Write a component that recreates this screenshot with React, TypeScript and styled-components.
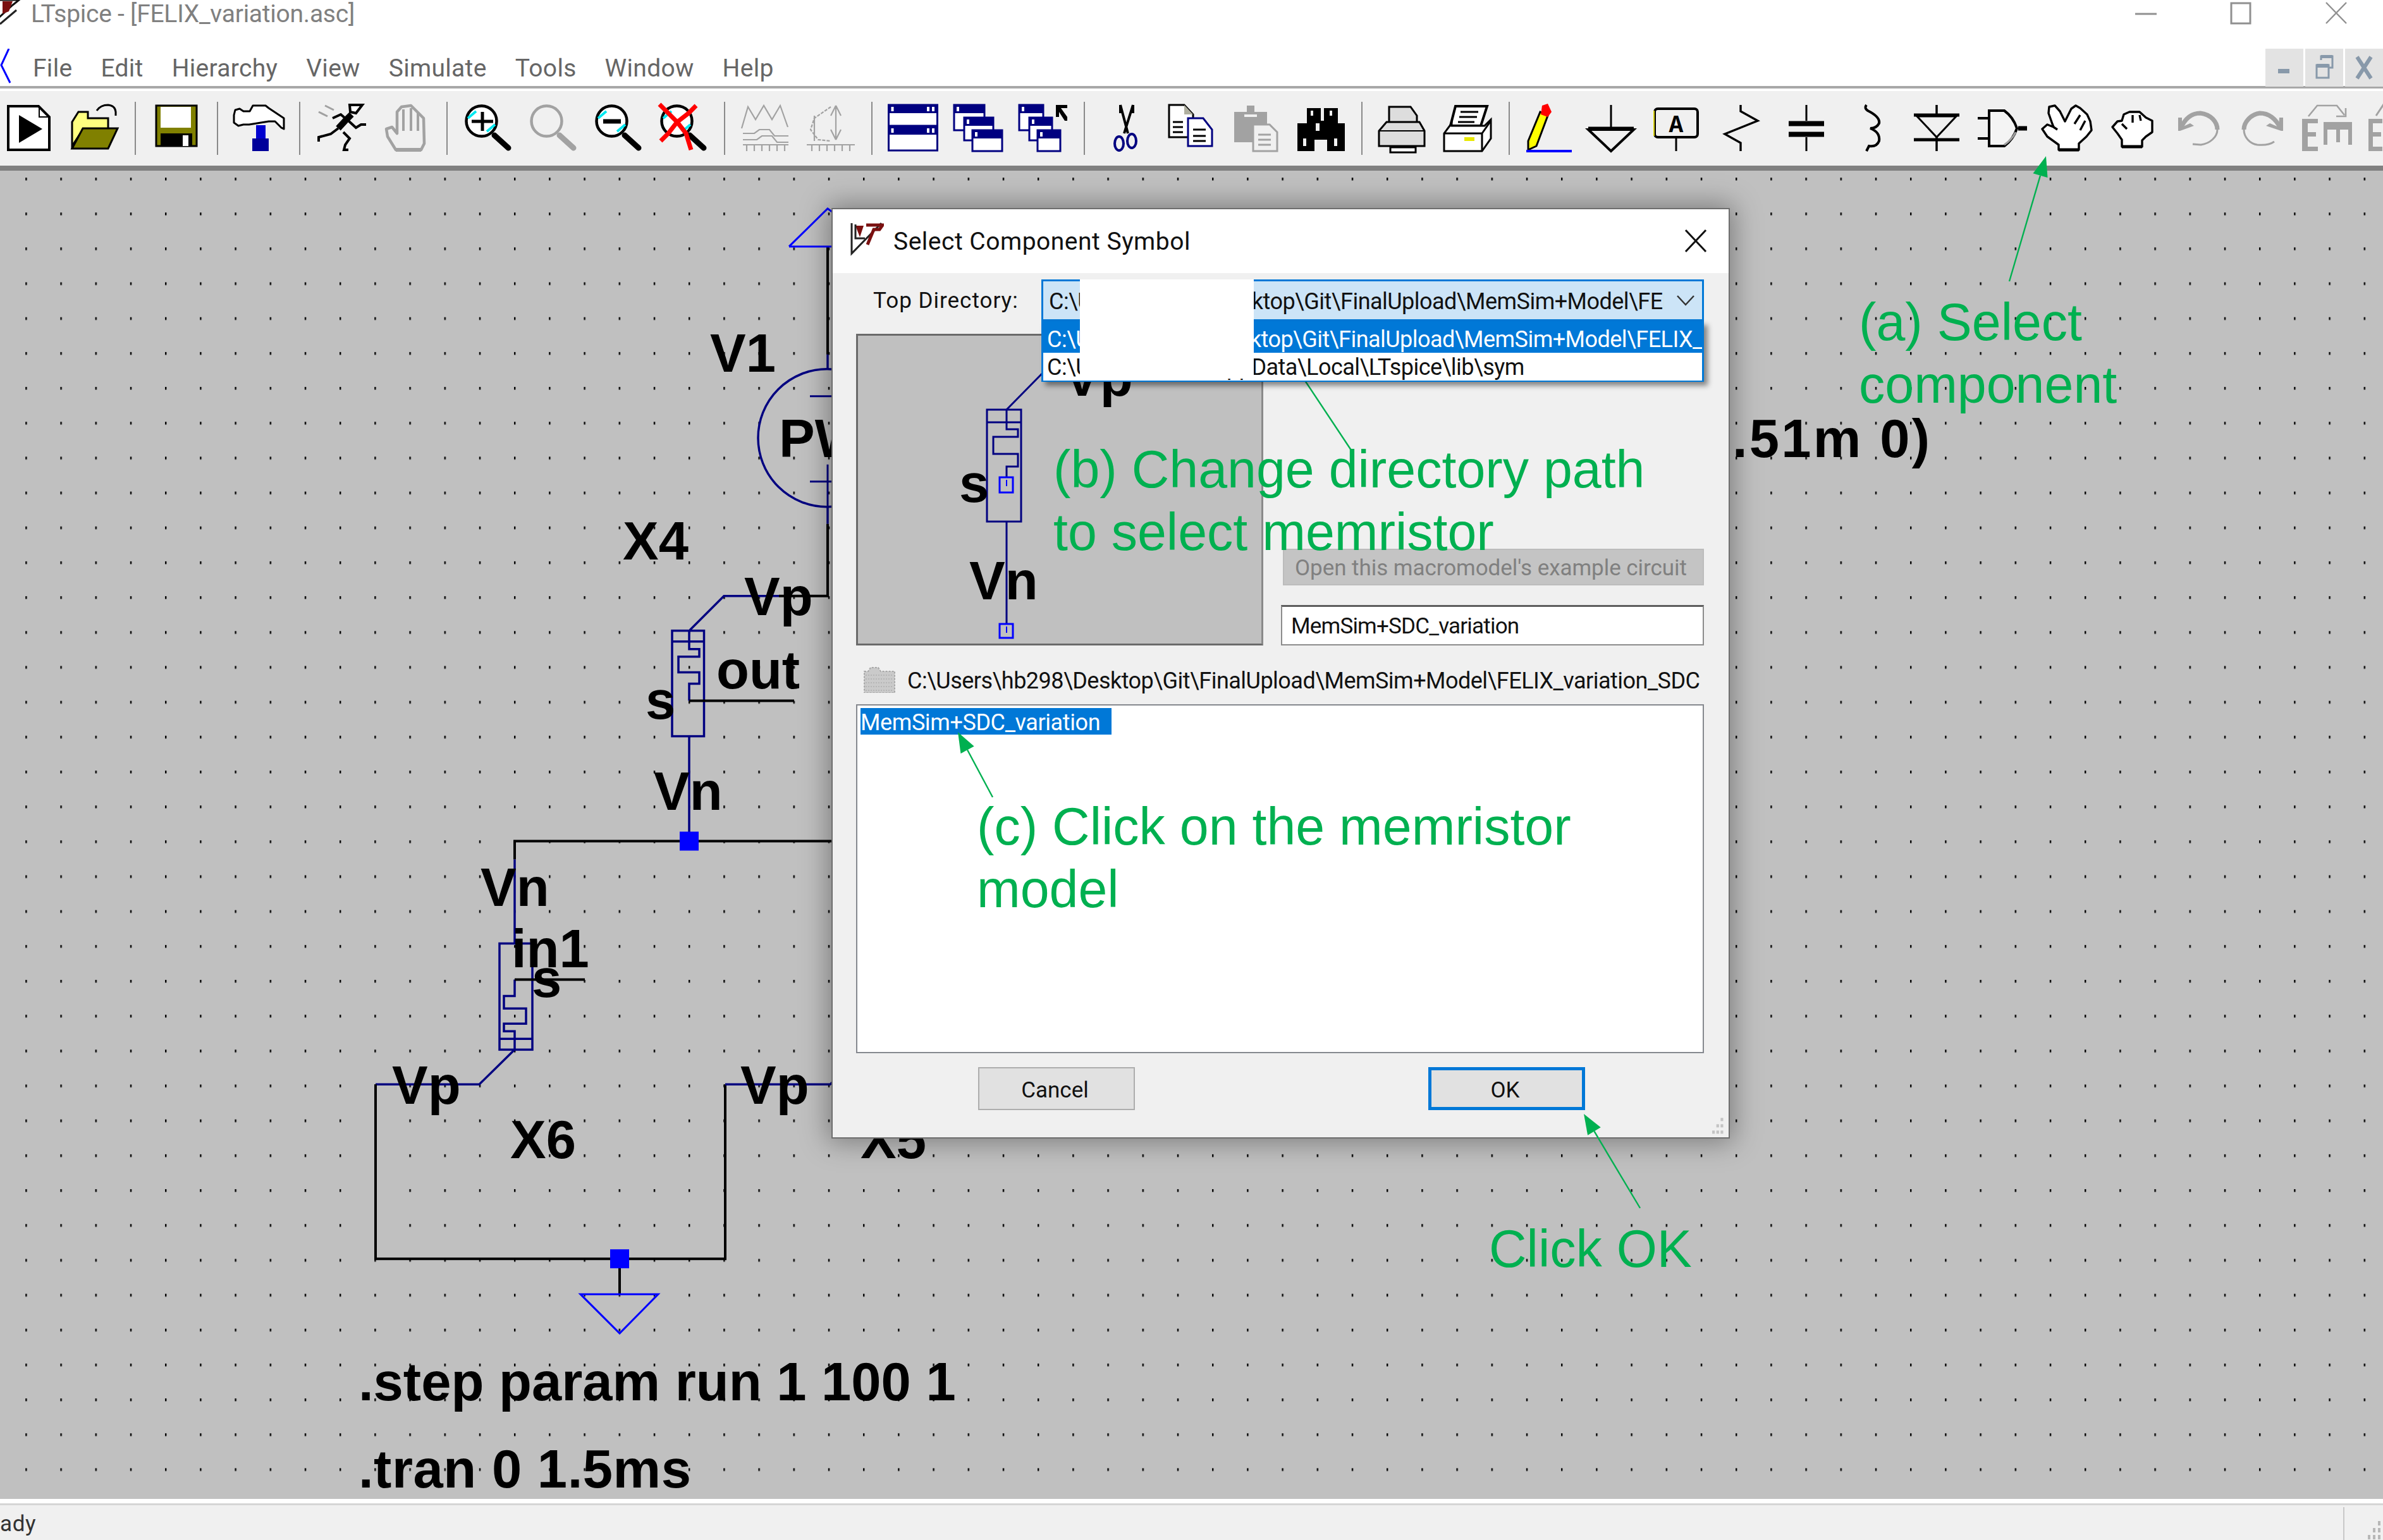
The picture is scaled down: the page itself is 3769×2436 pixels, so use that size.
import React from "react";
import styled, { createGlobalStyle } from "styled-components";

const Global = createGlobalStyle`
  html, body { margin: 0; padding: 0; background: #fff; }
  #root { width: 3769px; height: 2436px; }
`;

const Page = styled.div`
  position: relative;
  width: 3769px;
  height: 2436px;
  overflow: hidden;
  display: flex;
  flex-direction: column;
  font-family: Roboto, "Liberation Sans", sans-serif;
  background: #fff;
`;

const TitleBar = styled.div`
  height: 71px;
  display: flex;
  align-items: flex-start;
  background: #fff;
  flex: none;
`;
const AppIcon = styled.svg`
  width: 36px;
  height: 40px;
  flex: none;
  margin-left: 0;
`;
const AppTitle = styled.div`
  font-size: 39px;
  line-height: 44px;
  color: #808080;
  margin-left: 13px;
  flex: 1;
  letter-spacing: -0.25px;
`;
const WindowButtons = styled.div`
  display: flex;
  align-items: flex-start;
  margin-right: 56px;
  gap: 115px;
`;
const WindowGlyph = styled.svg`
  width: 36px;
  height: 40px;
  display: block;
`;

const MenuBar = styled.div`
  height: 69px;
  display: flex;
  align-items: flex-start;
  background: #fff;
  flex: none;
  border-bottom: 4px solid #a8a8a8;
  box-sizing: border-box;
`;
const BlueMark = styled.svg`
  width: 20px;
  height: 60px;
  flex: none;
  margin-top: 6px;
`;
const MenuList = styled.nav`
  display: flex;
  gap: 45px;
  margin-left: 32px;
  flex: 1;
  padding-top: 12px;
`;
const MenuItem = styled.span`
  font-size: 39px;
  line-height: 50px;
  color: #666;
  letter-spacing: 0.3px;
`;
const MdiButtons = styled.div`
  display: flex;
  gap: 3px;
  margin-top: 6px;
`;
const MdiButton = styled.div`
  width: 60px;
  height: 60px;
  background: #e3e3e3;
  display: flex;
  align-items: center;
  justify-content: center;
`;

const Toolbar = styled.div`
  flex: none;
  height: 130px;
  border-top: 4px solid #fff;
  border-bottom: 8px solid #808080;
  box-sizing: border-box;
  background: #f0f0f0;
  display: flex;
  align-items: center;
  margin-left: -6px;
  width: 3900px;
`;
const ToolSlot = styled.div<{ $w?: number }>`
  width: ${(p) => p.$w ?? 103}px;
  height: 80px;
  flex: none;
  display: flex;
  justify-content: center;
  align-items: center;
`;
const ToolIcon = styled.svg`
  width: 80px;
  height: 80px;
  display: block;
  overflow: visible;
  flex: none;
`;
const ToolSep = styled.div`
  width: 27px;
  flex: none;
  height: 84px;
  display: flex;
  justify-content: center;
  &::before {
    content: "";
    width: 2px;
    background: #8a8a8a;
  }
`;

const Canvas = styled.div`
  flex: 1;
  position: relative;
  background: #c0c0c0;
  min-height: 0;
`;
const SchematicSvg = styled.svg`
  width: 100%;
  height: 100%;
  display: block;
`;

const StatusBar = styled.div`
  flex: none;
  height: 65px;
  box-sizing: border-box;
  border-top: 3px solid #fff;
  display: flex;
  background: #f0f0f0;
  box-shadow: inset 0 4px 0 #fff, inset 0 7px 0 #d6d6d6;
  font-size: 35px;
  color: #333;
  align-items: flex-end;
`;
const StatusText = styled.div`
  flex: 1;
  line-height: 50px;
  letter-spacing: 0.6px;
`;
const StatusGrip = styled.div`
  width: 61px;
  height: 52px;
  border-left: 2px solid #c8c8c8;
  display: flex;
  justify-content: flex-end;
  align-items: flex-end;
`;

const Dialog = styled.div`
  position: absolute;
  left: 1317px;
  top: 331px;
  width: 1417px;
  height: 1468px;
  background: #f0f0f0;
  box-shadow: 0 0 0 2px #6e6e6e, 0 0 40px 8px rgba(0, 0, 0, 0.35);
  display: flex;
  flex-direction: column;
`;
const DialogTitle = styled.div`
  height: 101px;
  background: #fff;
  display: flex;
  align-items: center;
  flex: none;
  font-size: 39px;
  color: #111;
`;
const DialogLogo = styled.svg`
  width: 54px;
  height: 54px;
  margin-left: 27px;
  margin-top: -8px;
  flex: none;
`;
const DialogCaption = styled.div`
  margin-left: 15px;
  flex: 1;
  margin-top: 1px;
  letter-spacing: 0.5px;
`;
const DialogClose = styled.svg`
  width: 36px;
  height: 36px;
  margin-right: 34px;
  margin-top: -2px;
`;
const DialogBody = styled.div`
  flex: 1;
  padding: 10px 39px 0 37px;
  display: flex;
  flex-direction: column;
  font-size: 36px;
  color: #111;
  position: relative;
`;
const TopRow = styled.div`
  display: flex;
  height: 66px;
  align-items: center;
  flex: none;
  position: relative;
  z-index: 3;
`;
const TopLabel = styled.div`
  width: 266px;
  margin-left: 27px;
  margin-top: 0;
  flex: none;
  font-size: 35px;
  letter-spacing: 1px;
`;
const Combo = styled.div`
  position: relative;
  width: 1048px;
  height: 66px;
  box-sizing: border-box;
  background: #cce4f7;
  border: 3px solid #0078d7;
  display: flex;
  align-items: center;
  padding-left: 9px;
`;
const ComboText = styled.div`
  width: 973px;
  overflow: hidden;
  white-space: nowrap;
  flex: none;
  letter-spacing: -0.53px;
  padding-top: 4px;
`;
const ComboArrow = styled.svg`
  width: 30px;
  height: 20px;
  margin-left: 19px;
  flex: none;
`;
const DropList = styled.div`
  position: absolute;
  left: -3px;
  right: -3px;
  top: 63px;
  height: 96px;
  box-sizing: border-box;
  background: #fff;
  border: 3px solid #0078d7;
  box-shadow: 6px 6px 8px rgba(0, 0, 0, 0.45);
`;
const DropItem = styled.div<{ $active?: boolean }>`
  height: ${(p) => (p.$active ? 47 : 44)}px;
  line-height: ${(p) => (p.$active ? 53 : 46)}px;
  padding-left: 6px;
  white-space: nowrap;
  overflow: hidden;
  letter-spacing: -0.53px;
  background: ${(p) => (p.$active ? "#0078d7" : "#fff")};
  color: ${(p) => (p.$active ? "#fff" : "#111")};
`;
const RedactPatch = styled.div`
  position: absolute;
  left: 58px;
  top: -3px;
  width: 275px;
  height: 157px;
  background: #fff;
`;
const MainRow = styled.div`
  display: flex;
  justify-content: space-between;
  margin-top: 20px;
  height: 493px;
  flex: none;
`;
const Preview = styled.div`
  width: 644px;
  height: 493px;
  box-sizing: border-box;
  background: #c0c0c0;
  border: 3px solid #6a6a6a;
  border-right-color: #8a8a8a;
  flex: none;
`;
const PreviewSvg = styled.svg`
  display: block;
  width: 100%;
  height: 100%;
`;
const SideColumn = styled.div`
  width: 669px;
  display: flex;
  flex-direction: column;
  justify-content: flex-end;
  align-items: flex-end;
  gap: 31px;
`;
const ExampleButton = styled.div`
  width: 666px;
  height: 58px;
  box-sizing: border-box;
  background: #c4c4c4;
  border: 2px solid #bcbcbc;
  color: #808080;
  display: flex;
  align-items: center;
  padding: 2px 0 0 17px;
  font-size: 35px;
  letter-spacing: -0.05px;
`;
const NameField = styled.div`
  width: 669px;
  height: 64px;
  box-sizing: border-box;
  background: #fff;
  border: 2px solid #8c8c8c;
  border-top: 3px solid #5c5c5c;
  padding: 2px 0 0 14px;
  display: flex;
  align-items: center;
  font-size: 35px;
  letter-spacing: -0.8px;
`;
const PathRow = styled.div`
  display: flex;
  align-items: center;
  margin-top: 33px;
  height: 42px;
  flex: none;
`;
const FolderGlyph = styled.svg`
  width: 52px;
  height: 42px;
  margin-left: 11px;
  flex: none;
`;
const PathText = styled.div`
  margin-left: 18px;
  padding-top: 4px;
  white-space: nowrap;
  letter-spacing: -0.52px;
`;
const ListBox = styled.div`
  margin-top: 18px;
  height: 552px;
  flex: none;
  box-sizing: border-box;
  background: #fff;
  border: 2px solid #85888e;
  padding: 4px 5px;
`;
const ListSelected = styled.div`
  width: 397px;
  height: 42px;
  line-height: 47px;
  background: #0078d7;
  color: #fff;
  white-space: nowrap;
  letter-spacing: -0.4px;
`;
const ButtonRow = styled.div`
  display: flex;
  margin-top: 22px;
  flex: none;
`;
const DialogButton = styled.div<{ $primary?: boolean }>`
  width: 248px;
  height: 68px;
  box-sizing: border-box;
  background: #e1e1e1;
  border: ${(p) => (p.$primary ? "5px solid #0078d7" : "2px solid #adadad")};
  margin-left: ${(p) => (p.$primary ? 464 : 193)}px;
  display: flex;
  align-items: center;
  justify-content: center;
  padding: 4px 5px 0 0;
  font-size: 35px;
`;
const DialogGrip = styled.svg`
  position: absolute;
  right: 6px;
  bottom: 4px;
  width: 30px;
  height: 30px;
`;

const AnnotationLayer = styled.svg`
  position: absolute;
  left: 0;
  top: 0;
  width: 3769px;
  height: 2436px;
  pointer-events: none;
`;
const Annotation = styled.div<{ $x: number; $y: number }>`
  position: absolute;
  left: ${(p) => p.$x}px;
  top: ${(p) => p.$y}px;
  font-family: "Liberation Sans", Arial, sans-serif;
  font-size: 82.5px;
  line-height: 99px;
  color: #00b050;
  white-space: pre;
`;

const NAVY = "#000080";
const BLUE = "#0000ff";

const Arrow = ({ x1, y1, x2, y2 }: { x1: number; y1: number; x2: number; y2: number }) => {
  const dx = x2 - x1;
  const dy = y2 - y1;
  const l = Math.hypot(dx, dy);
  const ux = dx / l;
  const uy = dy / l;
  const bx = x2 - ux * 32;
  const by = y2 - uy * 32;
  const hw = 12;
  return (
    <g>
      <line x1={x1} y1={y1} x2={bx} y2={by} stroke="#00b050" strokeWidth={2.4} />
      <polygon
        points={`${x2},${y2} ${bx - uy * hw},${by + ux * hw} ${bx + uy * hw},${by - ux * hw}`}
        fill="#00b050"
      />
    </g>
  );
};

const T = ({ x, y, len, children }: { x: number; y: number; len?: number; children: React.ReactNode }) => (
  <text
    x={x}
    y={y}
    textLength={len}
    fontFamily="'Liberation Sans', Arial, sans-serif"
    fontWeight={700}
    fontSize={85}
    fill="#000"
  >
    {children}
  </text>
);
const W = ({ d, c = "#000", w = 4 }: { d: string; c?: string; w?: number }) => (
  <path d={d} fill="none" stroke={c} strokeWidth={w} />
);

const Junction = ({ x, y }: { x: number; y: number }) => <rect x={x - 15} y={y - 15} width={30} height={30} fill={BLUE} />;

const Schematic = () => (
  <SchematicSvg viewBox="0 270 3769 2102" preserveAspectRatio="none">
    <defs>
      <pattern id="grid" x="41.2" y="283" width="55.2" height="55.2" patternUnits="userSpaceOnUse">
        <rect x="-1" y="-2" width="2.4" height="4.4" fill="#000" />
        <rect x="54.2" y="-2" width="2.4" height="4.4" fill="#000" />
        <rect x="-1" y="53.2" width="2.4" height="4.4" fill="#000" />
        <rect x="54.2" y="53.2" width="2.4" height="4.4" fill="#000" />
      </pattern>
    </defs>
    <rect x="0" y="270" width="3769" height="2102" fill="url(#grid)" />

    <W d="M1309 390V561" />
    <W d="M1248 390L1309 330L1330 345M1248 390H1340" c={BLUE} w={3} />
    <W d="M1309 561V585M1309 802V829" c={NAVY} w={3.5} />
    <circle cx="1308" cy="693" r="109" fill="none" stroke={NAVY} strokeWidth={3.5} />
    <W d="M1281 627H1330M1281 762H1330M1309 735V802" c={NAVY} w={3} />
    <W d="M1309 829V943H1232" />
    <W d="M1232 943H1145L1091 997" c={NAVY} w={3.5} />
    <rect x="1063" y="998" width="50.5" height="167" fill="none" stroke={NAVY} strokeWidth={3.5} />
    <W d="M1063 1015H1113M1090 998V1027H1106V1039H1073V1064H1106V1082H1090V1109" c={NAVY} w={3.5} />
    <W d="M1090 1109H1256" />
    <W d="M1090 1165V1331" c={NAVY} w={3.5} />
    <W d="M814 1360V1331H1340" />
    <W d="M814 1360V1493" c={NAVY} w={3.5} />
    <rect x="790" y="1493" width="52" height="168" fill="none" stroke={NAVY} strokeWidth={3.5} />
    <W d="M790 1644H842M814 1550V1576H797V1596H832V1620H797V1632H814V1661L758 1716H594" c={NAVY} w={3.5} />
    <W d="M814 1550H925" />
    <W d="M594 1716V1992H1147V1716" />
    <W d="M1147 1716H1313L1330 1700" c={NAVY} w={3.5} />
    <W d="M980 1992V2048" />
    <polygon points="918,2048 1041,2048 980,2110" fill="none" stroke={BLUE} strokeWidth={3} />
    <Junction x={1090} y={1331} />
    <Junction x={980} y={1992} />

    <T x={1123} y={588}>V1</T>
    <T x={1232} y={723}>PWL</T>
    <T x={2740} y={723} len={312}>.51m 0)</T>
    <T x={985} y={885}>X4</T>
    <T x={1177} y={973}>Vp</T>
    <T x={1133} y={1089}>out</T>
    <T x={1021} y={1137}>s</T>
    <T x={1034} y={1281}>Vn</T>
    <T x={760} y={1434}>Vn</T>
    <T x={809} y={1531}>in1</T>
    <T x={841} y={1578}>s</T>
    <T x={620} y={1747}>Vp</T>
    <T x={1171} y={1747}>Vp</T>
    <T x={807} y={1833}>X6</T>
    <T x={1361} y={1833}>X5</T>
    <T x={567} y={2216}>.step param run 1 100 1</T>
    <T x={567} y={2354} len={526}>.tran 0 1.5ms</T>
  </SchematicSvg>
);

const PreviewDrawing = () => (
  <PreviewSvg viewBox="1357 532 638 487">
    <W d="M1592 649L1650 590" c={NAVY} w={3} />
    <rect x="1561" y="649" width="54" height="177" fill="none" stroke={NAVY} strokeWidth={3} />
    <W d="M1561 669H1615M1592 649V680H1610V692H1571V719H1610V739H1592V756M1592 826V988" c={NAVY} w={3} />
    <rect x="1581" y="756" width="21" height="24" fill="none" stroke={BLUE} strokeWidth={3} />
    <W d="M1592 760V770" c={BLUE} w={2} />
    <rect x="1581" y="988" width="21" height="22" fill="none" stroke={BLUE} strokeWidth={3} />
    <W d="M1592 992V1002" c={BLUE} w={2} />
    <T x={1517} y={795}>s</T>
    <T x={1533} y={949}>Vn</T>
    <T x={1683} y={627}>Vp</T>
  </PreviewSvg>
);

const Icon = ({ w, children }: { w?: number; children: React.ReactNode }) => (
  <ToolSlot $w={w}>
    <ToolIcon viewBox="0 0 80 80">{children}</ToolIcon>
  </ToolSlot>
);

const G = "#a2a2a2";

const Magnifier = ({ gray, children }: { gray?: boolean; children?: React.ReactNode }) => {
  const c = gray ? G : "#000";
  return (
    <>
      <circle cx="29.5" cy="28.5" r="24" fill={gray ? "none" : "#fff"} stroke={c} strokeWidth={4.5} />
      {!gray && <path d="M8 24L21 13M38 45L51 34" stroke="#00e8f0" strokeWidth={4} fill="none" />}
      <path d="M50 51L72 71" stroke={c} strokeWidth={9} strokeLinecap="round" fill="none" />
      {children}
    </>
  );
};

const HandPath = ({ c, fill, d }: { c: string; fill: string; d: string }) => (
  <path d={d} fill={fill} stroke={c} strokeWidth={3.4} strokeLinejoin="round" />
);

const MiniWin = ({ x, y, w, h, t = 12 }: { x: number; y: number; w: number; h: number; t?: number }) => (
  <>
    <rect x={x} y={y} width={w} height={h} fill="#fff" stroke="#000080" strokeWidth={3} />
    <rect x={x} y={y} width={w} height={t} fill="#000080" />
    <rect x={x + 4} y={y + 3} width={4} height={t - 6} fill="#fff" />
  </>
);

type Tool = { w?: number; node: React.ReactNode } | "sep";

const toolIcons: Tool[] = [
  {
    node: (
      <>
        <path d="M7 5H55L72 22V74H7Z" fill="#fff" stroke="#000" strokeWidth={4} />
        <path d="M56 5V22H72" fill="none" stroke="#000" strokeWidth={2} />
        <path d="M24 19L61 41L24 63Z" fill="#000" />
      </>
    ),
  },
  {
    node: (
      <>
        <path d="M5 62V30L15 14H30V24H62V42H22L5 68Z" fill="#ffff80" stroke="#000" strokeWidth={3} />
        <path d="M22 40H77L62 72H5Z" fill="#808000" stroke="#000" strokeWidth={3} />
        <path d="M44 12Q50 3 62 3Q73 4 74 14V28" fill="none" stroke="#000" strokeWidth={3} />
        <path d="M66 20H78V28H66Z" fill="#f0f0f0" />
      </>
    ),
  },
  "sep",
  {
    node: (
      <>
        <rect x="8" y="4" width="64" height="64" fill="#808000" stroke="#000" strokeWidth={3} />
        <rect x="15" y="6" width="48" height="33" fill="#fff" />
        <rect x="15" y="48" width="50" height="21" fill="#000" />
        <rect x="50" y="51" width="9" height="17" fill="#fff" />
      </>
    ),
  },
  "sep",
  {
    node: (
      <>
        <path
          d="M1 19V31L8 36L16 34H25L56 29H66L76 39L80 41V24L56 8L51 4H31L26 13H16L10 9L3 11Z"
          fill="#fff"
          stroke="#000"
          strokeWidth={3}
          strokeLinejoin="round"
        />
        <rect x="36" y="35" width="15" height="22" fill="#0000d0" />
        <rect x="30" y="56" width="26" height="20" fill="#00009a" />
      </>
    ),
  },
  "sep",
  {
    node: (
      <>
        <path d="M15 4L29 11M5 14L19 21" stroke="#a0a0a0" strokeWidth={3} fill="none" />
        <path d="M54 3H74L64 16L55 14Z" fill="#fff" stroke="#000" strokeWidth={4} />
        <path d="M57 18L47 28L36 40" stroke="#000" strokeWidth={10} fill="none" />
        <path
          d="M36 40L24 49L5 54V61M27 24L40 18L47 24M52 28L64 39L72 34H80M44 46L54 56L47 66L45 74H52"
          stroke="#000"
          strokeWidth={4}
          fill="none"
        />
      </>
    ),
  },
  {
    node: (
      <>
        <path
          d="M9 41L18 38L26 48V14L33 6L48 4L58 14L68 24L69 64L64 74H24L11 53Z"
          fill="#f0f0f0"
          stroke={G}
          strokeWidth={4.5}
          strokeLinejoin="round"
        />
        <path d="M36 10V44M48 8V44M59 16V44" stroke={G} strokeWidth={4} />
        <path d="M24 74H64" stroke={G} strokeWidth={6} />
      </>
    ),
  },
  "sep",
  {
    node: (
      <Magnifier>
        <path d="M31 14V44M14 29H48" stroke="#000" strokeWidth={5} />
      </Magnifier>
    ),
  },
  { node: <Magnifier gray /> },
  {
    node: (
      <Magnifier>
        <path d="M16 29H44" stroke="#000" strokeWidth={7} />
      </Magnifier>
    ),
  },
  {
    node: (
      <Magnifier>
        <path d="M2 2L20 20L30 30L16 48L4 60M60 4L48 16L30 30L44 48L52 74" stroke="#f00" strokeWidth={7} fill="none" />
      </Magnifier>
    ),
  },
  "sep",
  {
    node: (
      <g fill="none" stroke={G} strokeWidth={2.2}>
        <path d="M2 40L12 6L24 26L37 4L50 26L63 4L75 38" />
        <path d="M4 48H22L30 42H46L54 52H76M4 58H26L34 52H50L58 62H76" />
        <path d="M4 66H76M10 66V76M22 66V76M34 66V76M46 66V76M58 66V76M70 66V76" />
      </g>
    ),
  },
  {
    node: (
      <g fill="none" stroke={G} strokeWidth={2.2}>
        <path d="M40 6L14 24L8 42L20 58L40 60" strokeDasharray="5 2" />
        <path d="M48 4L40 20M48 4L56 20M48 4V58M48 58L40 42M48 58L56 42M14 20V60" />
        <path d="M2 66H78M10 66V76M22 66V76M34 66V76M46 66V76M58 66V76M70 66V76" />
      </g>
    ),
  },
  "sep",
  {
    node: (
      <>
        <MiniWin x={1.5} y={3} w={77} h={33} t={13} />
        <rect x="62" y="6" width="4" height="7" fill="#fff" />
        <rect x="70" y="6" width="4" height="7" fill="#fff" />
        <MiniWin x={1.5} y={37} w={77} h={38} t={13} />
        <rect x="62" y="40" width="4" height="7" fill="#fff" />
        <rect x="70" y="40" width="4" height="7" fill="#fff" />
      </>
    ),
  },
  {
    node: (
      <>
        <MiniWin x={2} y={3} w={48} h={40} t={13} />
        <MiniWin x={18} y={23} w={46} h={36} t={13} />
        <MiniWin x={31} y={43} w={47} h={33} t={13} />
      </>
    ),
  },
  {
    node: (
      <>
        <MiniWin x={2} y={3} w={38} h={40} t={13} />
        <MiniWin x={18} y={23} w={36} h={36} t={13} />
        <MiniWin x={31} y={43} w={36} h={33} t={13} />
        <path d="M60 3H78V8H68L78 22V28H74L65 14V22H60Z" fill="#000" />
      </>
    ),
  },
  "sep",
  {
    node: (
      <>
        <path d="M32 3L44 48M52 3L38 48M32 3V16M52 3V16" stroke="#000" strokeWidth={4} fill="none" />
        <ellipse cx="30" cy="64" rx="7" ry="11" fill="none" stroke="#000080" strokeWidth={4} />
        <ellipse cx="50" cy="60" rx="7" ry="11" fill="none" stroke="#000080" strokeWidth={4} />
      </>
    ),
  },
  {
    node: (
      <>
        <path d="M6 3H30L44 18V54H6Z" fill="#fff" stroke="#000" strokeWidth={3} />
        <path d="M30 3V18H44Z" fill="#b0b0a0" />
        <path d="M12 30H28M12 38H28M12 46H28" stroke="#000" strokeWidth={3} />
        <path d="M36 24H60L74 42V68H36Z" fill="#fff" stroke="#000080" strokeWidth={3} />
        <path d="M44 42H64M44 52H64M44 60H64" stroke="#000" strokeWidth={3} />
      </>
    ),
  },
  {
    node: (
      <>
        <path d="M6 14H26V4H38V14H58V62H6Z" fill={G} />
        <path d="M22 18H42V22H22Z" fill="#f0f0f0" />
        <path d="M36 34H62L74 46V76H36Z" fill="#f0f0f0" stroke={G} strokeWidth={3} />
        <path d="M44 50H64M44 58H64M44 66H64" stroke={G} strokeWidth={3} />
      </>
    ),
  },
  {
    node: (
      <>
        <path
          d="M18 8H40V28H45V8H67V32H78V76H50V58H30V76H3V32H18Z"
          fill="#000"
        />
        <path d="M24 12H28V20H24ZM54 12H58V20H54ZM32 32H38V44H32ZM12 56H17V68H12ZM61 56H66V68H61Z" fill="#f0f0f0" />
      </>
    ),
  },
  "sep",
  {
    node: (
      <>
        <rect x="20" y="70" width="40" height="8" fill="#fff" stroke="#000" strokeWidth={3} />
        <path d="M18 6H52L62 20V36H18Z" fill="#ddd" stroke="#000" strokeWidth={3} />
        <path d="M2 68V44L14 30H66L74 44V68Z" fill="#ddd" stroke="#000" strokeWidth={3} />
        <path d="M2 44H74" stroke="#000" strokeWidth={2} />
      </>
    ),
  },
  {
    node: (
      <>
        <path d="M20 5H70L60 36H12Z" fill="#fff" stroke="#000" strokeWidth={4} />
        <path d="M28 14H56M26 22H54M24 30H50" stroke="#000" strokeWidth={3} />
        <path d="M14 32L2 48V76H62L76 56V26L66 36H14Z" fill="#fff" stroke="#000" strokeWidth={3} />
        <path d="M2 48H62V76M62 48L76 28" stroke="#000" strokeWidth={3} fill="none" />
        <rect x="34" y="54" width="16" height="6" fill="#e8e800" />
      </>
    ),
  },
  "sep",
  {
    w: 96,
    node: (
      <>
        <path d="M9 60L28 14L40 20L22 68L9 74Z" fill="#ffff00" stroke="#000" strokeWidth={3} />
        <path d="M31 4L40 1L46 14L40 22L29 18Z" fill="#f00" />
        <path d="M6 76H78" stroke="#0000ff" strokeWidth={4} />
      </>
    ),
  },
  {
    node: (
      <>
        <path d="M40 3V42" stroke="#000" strokeWidth={3} />
        <path d="M4 42H76L40 76Z" fill="none" stroke="#000" strokeWidth={4} />
        <path d="M4 40H76" stroke="#000" strokeWidth={5} />
      </>
    ),
  },
  {
    node: (
      <>
        <path d="M40 54V76" stroke="#000" strokeWidth={3} />
        <rect x="6" y="9" width="68" height="45" rx="5" fill="none" stroke="#000" strokeWidth={4} />
        <path d="M5 12V52" stroke="#d8d000" strokeWidth={2} />
        <text
          x="40"
          y="46"
          textAnchor="middle"
          fontFamily="'Liberation Mono', monospace"
          fontWeight={700}
          fontSize={38}
          fill="#000"
        >
          A
        </text>
      </>
    ),
  },
  { node: <path d="M39 3V13L66 28L14 49L39 63V76" fill="none" stroke="#000" strokeWidth={3.4} /> },
  {
    node: (
      <>
        <path d="M40 3V28M40 54V76" stroke="#000" strokeWidth={3} />
        <path d="M12 32.5H68M12 49.5H68" stroke="#000" strokeWidth={8} />
      </>
    ),
  },
  { node: <path d="M32 3Q28 8 34 12Q54 22 52 32Q48 40 38 40Q54 46 52 60Q48 70 36 68L32 76" fill="none" stroke="#000" strokeWidth={4} /> },
  {
    node: (
      <>
        <path d="M40 3V76" stroke="#000" strokeWidth={3} />
        <path d="M4 19H76M4 58H76" stroke="#000" strokeWidth={5} />
        <path d="M9 21H71L40 54Z" fill="#f0f0f0" stroke="#000" strokeWidth={3} />
        <path d="M40 3V20M40 54V76" stroke="#000" strokeWidth={3} />
      </>
    ),
  },
  {
    node: (
      <>
        <path d="M20 12H44Q58 22 64 40Q58 58 44 68H20Z" fill="#f4f4f4" stroke="#000" strokeWidth={4} />
        <path d="M2 24H20M2 56H20" stroke="#000" strokeWidth={4} />
        <path d="M66 40H80" stroke="#000" strokeWidth={7} />
        <path d="M44 66Q56 58 62 46" stroke="#a0a0a0" strokeWidth={3} fill="none" />
      </>
    ),
  },
  {
    node: (
      <>
        <HandPath
          c="#000"
          fill="#fff"
          d="M27 74V66L9 53L1 41L9 34L19 38L17 33L11 16L12 6L21 4L29 13L37 29L42 19L47 9L54 4L61 8L72 18L77 29L79 43L71 53L59 64V74Z"
        />
        <path d="M61 19L52 33M69 28L61 43M19 38L25 42" stroke="#000" strokeWidth={3.4} fill="none" />
        <path d="M27 74H59" stroke="#000" strokeWidth={5} />
      </>
    ),
  },
  {
    node: (
      <>
        <HandPath
          c="#000"
          fill="#fff"
          d="M24 69V58L17 48L9 38L17 29L24 28L27 18L36 14H52L62 23L72 28V46L62 53L56 59V69Z"
        />
        <path d="M41 19V31M24 33L32 41M52 19L54 28" stroke="#000" strokeWidth={3.4} fill="none" />
        <path d="M24 69H56" stroke="#000" strokeWidth={5} />
      </>
    ),
  },
  {
    node: (
      <>
        <path d="M14 40C22 22 34 16 45 16C62 18 72 30 72 42" fill="none" stroke={G} strokeWidth={7} />
        <path d="M72 42C72 54 60 64 46 66L33 65" fill="none" stroke={G} strokeWidth={3} />
        <path d="M10 23V44H13L35 36L29 32L16 38L16 23Z" fill={G} />
      </>
    ),
  },
  {
    node: (
      <>
        <path d="M69 40C60 22 48 16 36 16C22 18 11 30 11 42" fill="none" stroke={G} strokeWidth={7} />
        <path d="M11 42C11 54 20 64 32 66C42 67 52 66 59 61" fill="none" stroke={G} strokeWidth={3} />
        <path d="M73 23V44H70L46 36L52 32L66 38L67 23Z" fill={G} />
      </>
    ),
  },
  {
    node: (
      <>
        <path d="M10 21L24 4H55L67 19M54 21H69V8" fill="none" stroke={G} strokeWidth={2.6} />
        <path d="M0 25H25V32H9V46H22V53H9V69H25V76H0Z" fill={G} />
        <path d="M34 30H79V66H73V42H60V62H54V42H40V66H34Z" fill={G} />
      </>
    ),
  },
  {
    node: (
      <>
        <path d="M14 20L26 2H40" fill="none" stroke={G} strokeWidth={3} />
        <path d="M2 25H24V32H9V46H22V53H9V69H24V76H2Z" fill={G} />
      </>
    ),
  },
];

const menus = ["File", "Edit", "Hierarchy", "View", "Simulate", "Tools", "Window", "Help"];
const FULL = "C:\\Users\\hb298\\Desktop\\Git\\FinalUpload\\MemSim+Model\\FELIX_variation_SDC";
const APPDATA = "C:\\Users\\hb298\\AppData\\Local\\LTspice\\lib\\sym";

const DotGrip = ({ c }: { c: string }) => (
  <svg width="36" height="36" viewBox="0 0 36 36">
    {[
      [28, 6],
      [20, 17],
      [28, 17],
      [12, 28],
      [20, 28],
      [28, 28],
    ].map(([x, y]) => (
      <rect key={`${x}-${y}`} x={x} y={y} width="4" height="7" fill={c} />
    ))}
  </svg>
);

export default function App() {
  return (
    <Page>
      <Global />
      <TitleBar>
        <AppIcon viewBox="0 0 36 40">
          <path d="M-2 28L20 8L30 0H-2Z" fill="#fff" stroke="#111" strokeWidth={3} />
          <path d="M4 2H20L14 18L4 22Z" fill="#7a1010" />
          <path d="M0 38L26 16" stroke="#222" strokeWidth={3} />
        </AppIcon>
        <AppTitle>LTspice - [FELIX_variation.asc]</AppTitle>
        <WindowButtons>
          <WindowGlyph viewBox="0 0 36 40">
            <path d="M2 22H36" stroke="#909090" strokeWidth={3} />
          </WindowGlyph>
          <WindowGlyph viewBox="0 0 36 40">
            <rect x="3" y="5" width="30" height="32" fill="none" stroke="#909090" strokeWidth={3} />
          </WindowGlyph>
          <WindowGlyph viewBox="0 0 36 40">
            <path d="M2 4L34 37M34 4L2 37" stroke="#909090" strokeWidth={2.4} />
          </WindowGlyph>
        </WindowButtons>
      </TitleBar>
      <MenuBar>
        <BlueMark viewBox="0 0 20 60">
          <path d="M14 0L2 26L16 54" fill="none" stroke="#0000ff" strokeWidth={3} />
        </BlueMark>
        <MenuList>
          {menus.map((m) => (
            <MenuItem key={m}>{m}</MenuItem>
          ))}
        </MenuList>
        <MdiButtons>
          <MdiButton>
            <svg width="24" height="24" viewBox="0 0 24 24">
              <rect x="2" y="14" width="18" height="7" fill="#8899aa" />
            </svg>
          </MdiButton>
          <MdiButton>
            <svg width="30" height="40" viewBox="0 0 30 40">
              <path d="M10 8V2H28V20H22" fill="none" stroke="#8899aa" strokeWidth={3} />
              <path d="M10 2H28" stroke="#8899aa" strokeWidth={6} />
              <rect x="3" y="16" width="19" height="20" fill="none" stroke="#8899aa" strokeWidth={3} />
              <path d="M3 17H22" stroke="#8899aa" strokeWidth={6} />
            </svg>
          </MdiButton>
          <MdiButton>
            <svg width="28" height="40" viewBox="0 0 28 40">
              <path d="M3 3L25 37M25 3L3 37" stroke="#8899aa" strokeWidth={6} />
            </svg>
          </MdiButton>
        </MdiButtons>
      </MenuBar>
      <Toolbar>
        {toolIcons.map((t, i) =>
          t === "sep" ? (
            <ToolSep key={i} />
          ) : (
            <Icon key={i} w={t.w}>
              {t.node}
            </Icon>
          )
        )}
      </Toolbar>
      <Canvas>
        <Schematic />
      </Canvas>
      <StatusBar>
        <StatusText>ady</StatusText>
        <StatusGrip>
          <DotGrip c="#b8b8b8" />
        </StatusGrip>
      </StatusBar>

      <Dialog>
        <DialogTitle>
          <DialogLogo viewBox="0 0 54 54">
            <path d="M3 2V50L50 2" fill="#fff" stroke="#222" strokeWidth={3} />
            <path d="M9 6L16 24L22 6Z" fill="#7a1010" />
            <path d="M26 5H52L47 12H38L28 36" fill="none" stroke="#7a1010" strokeWidth={5} />
            <path d="M9 4V26H24" fill="none" stroke="#222" strokeWidth={3} />
          </DialogLogo>
          <DialogCaption>Select Component Symbol</DialogCaption>
          <DialogClose viewBox="0 0 36 36">
            <path d="M2 1L34 35M34 1L2 35" stroke="#111" strokeWidth={3} />
          </DialogClose>
        </DialogTitle>
        <DialogBody>
          <TopRow>
            <TopLabel>Top Directory:</TopLabel>
            <Combo>
              <ComboText>{FULL}</ComboText>
              <ComboArrow viewBox="0 0 30 20">
                <path d="M2 3L15 17L28 3" fill="none" stroke="#333" strokeWidth={2.5} />
              </ComboArrow>
              <DropList>
                <DropItem $active>{FULL}</DropItem>
                <DropItem>{APPDATA}</DropItem>
              </DropList>
              <RedactPatch />
            </Combo>
          </TopRow>
          <MainRow>
            <Preview>
              <PreviewDrawing />
            </Preview>
            <SideColumn>
              <ExampleButton>Open this macromodel's example circuit</ExampleButton>
              <NameField>MemSim+SDC_variation</NameField>
            </SideColumn>
          </MainRow>
          <PathRow>
            <FolderGlyph viewBox="0 0 52 42">
              <path d="M2 8H8L12 2H24L28 8H50V42H2Z" fill="#cacaca" stroke="#a8a8a8" strokeWidth={2} strokeDasharray="3 2" />
              <path d="M4 14H48M4 20H48M4 26H48M4 32H48M4 38H48" stroke="#b0b0b0" strokeWidth={1.5} strokeDasharray="2 2" />
            </FolderGlyph>
            <PathText>{FULL}</PathText>
          </PathRow>
          <ListBox>
            <ListSelected>MemSim+SDC_variation</ListSelected>
          </ListBox>
          <ButtonRow>
            <DialogButton>Cancel</DialogButton>
            <DialogButton $primary>OK</DialogButton>
          </ButtonRow>
          <DialogGrip viewBox="0 0 36 36">
            {[
              [28, 4],
              [20, 16],
              [28, 16],
              [12, 28],
              [20, 28],
              [28, 28],
            ].map(([x, y]) => (
              <rect key={`${x}-${y}`} x={x} y={y} width="5" height="6" fill="#c4c4c4" />
            ))}
          </DialogGrip>
        </DialogBody>
      </Dialog>

      <AnnotationLayer viewBox="0 0 3769 2436">
        <Arrow x1={3178} y1={445} x2={3236} y2={247} />
        <Arrow x1={2137} y1={712} x2={2026} y2={545} />
        <Arrow x1={1570} y1={1261} x2={1515} y2={1158} />
        <Arrow x1={2594} y1={1911} x2={2505} y2={1762} />
      </AnnotationLayer>
      <Annotation $x={2940} $y={460}>{"(a) Select\ncomponent"}</Annotation>
      <Annotation $x={1666} $y={693}>{"(b) Change directory path\nto select memristor"}</Annotation>
      <Annotation $x={1545} $y={1258}>{"(c) Click on the memristor\nmodel"}</Annotation>
      <Annotation $x={2355} $y={1926}>Click OK</Annotation>
    </Page>
  );
}
